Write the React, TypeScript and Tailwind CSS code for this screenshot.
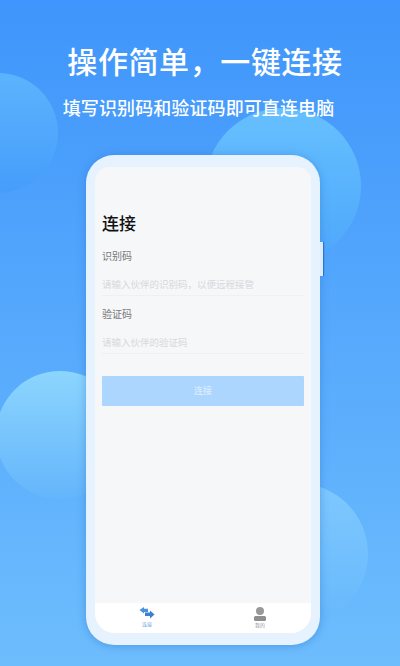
import React from "react";

const cjk = "font-['Noto_Sans_CJK_SC','Noto_Sans',sans-serif]";

function Circle({ className }: { className: string }) {
  return <div className={"absolute rounded-full bg-gradient-to-b " + className} />;
}

export default function App() {
  return (
    <div className={"relative w-[400px] h-[666px] overflow-hidden bg-gradient-to-b from-[#3f95fb] to-[#6dbdfd] flex flex-col items-center " + cjk}>
      <Circle className="left-[-62px] top-[73px] w-[120px] h-[120px] from-[#5cb3fd] to-[#469dfb]" />
      <Circle className="left-[205px] top-[108px] w-[156px] h-[156px] from-[#66c0fe] to-[#4ea6fb]" />
      <Circle className="left-[-4px] top-[371px] w-[128px] h-[128px] from-[#8cd5fe] to-[#64b5fb]" />
      <Circle className="left-[226px] top-[483px] w-[142px] h-[142px] from-[#7ec8fe] to-[#67b8fc]" />

      <h1 className="relative ml-[10px] mt-[40px] h-[40px] leading-[40px] text-[30px] font-medium text-white text-center tracking-[0.6px] whitespace-nowrap">操作简单，一键连接</h1>
      <p className="relative mr-[3px] mt-[13px] h-[28px] leading-[28px] text-[18px] font-medium text-white tracking-[0.1px] whitespace-nowrap">填写识别码和验证码即可直连电脑</p>

      <div className="relative ml-[6px] mt-[34px] w-[234px] h-[490px] rounded-[28px] bg-[#e6f2fe] shadow-[0_1px_8px_rgba(40,110,200,0.45)] px-[9px] pt-[12px] pb-[12px] flex flex-col">
        <div className="absolute right-[-3px] top-[87px] w-[3px] h-[34px] bg-[#dcecfc] shadow-[1px_0_1px_rgba(30,90,170,0.7)]" />
        <div className="flex-1 flex flex-col bg-[#f5f7f9] rounded-t-[14px] rounded-b-[20px] overflow-hidden">
          <div className="flex-1 px-[7px] pt-[44px] flex flex-col">
            <div className="h-[24px] leading-[24px] text-[17px] font-medium text-[#111]">连接</div>
            <div className="mt-[14px] h-[14px] leading-[14px] text-[10px] text-[#777]">识别码</div>
            <div className="mt-[13px] h-[20px] border-b border-[#eef0f2] text-[9.5px] leading-[16px] text-[#d6d9dd] whitespace-nowrap">请输入伙伴的识别码，以便远程接管</div>
            <div className="mt-[11px] h-[14px] leading-[14px] text-[10px] text-[#777]">验证码</div>
            <div className="mt-[13px] h-[20px] border-b border-[#eef0f2] text-[9.5px] leading-[16px] text-[#d6d9dd] whitespace-nowrap">请输入伙伴的验证码</div>
            <div className="mt-[22px] h-[30px] bg-[#acd6fe] rounded-[1px] flex items-center justify-center text-[9px] text-[#e4f2ff]">连接</div>
          </div>
          <div className="h-[30px] bg-white flex">
            <div className="w-[104px] flex flex-col items-center pt-[4px]">
              <svg width="16" height="12" viewBox="0 0 16 12">
                <path d="M0.5 3 L5 0 V1.8 H9 V5 H5 V6.5 Z" fill="#4a90dc" />
                <path d="M15.5 7.5 L11 3.5 V5.5 H6 V9 H11 V11.5 Z" fill="#3d7fd0" />
              </svg>
              <span className="mt-[1px] text-[5px] leading-[8px] text-[#6aa7e4]">连接</span>
            </div>
            <div className="flex-1 flex flex-col items-center pt-[4px] pl-[10px]">
              <svg width="14" height="14" viewBox="0 0 14 14">
                <circle cx="7" cy="4" r="4" fill="#999" />
                <rect x="1" y="9" width="12" height="5" rx="1.5" fill="#8f8f8f" />
              </svg>
              <span className="text-[5px] leading-[8px] text-[#999]">我的</span>
            </div>
          </div>
        </div>
      </div>
    </div>
  );
}
